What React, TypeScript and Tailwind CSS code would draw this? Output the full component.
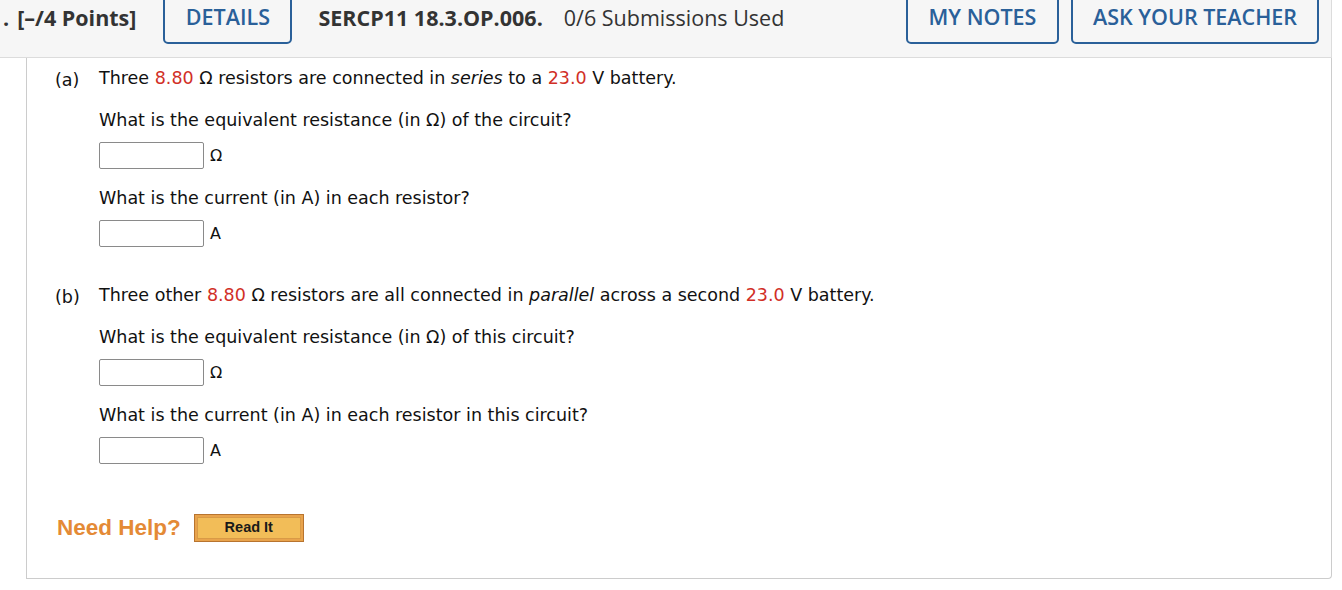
import React from "react";

const body = { fontFamily: '"DejaVu Sans", Verdana, sans-serif' };

function Red({ children }: { children: React.ReactNode }) {
  return <span className="text-[#d12f26]">{children}</span>;
}

function Answer({ unit }: { unit: string }) {
  return (
    <div className="flex items-center gap-[6px] h-[27px]">
      <div className="w-[105px] h-[27px] border border-[#8a8a8a] rounded-[2px] bg-white" />
      <span className="text-[16px]">{unit}</span>
    </div>
  );
}

export default function App() {
  return (
    <div className="w-[1342px] h-[590px] bg-white overflow-hidden">
      <div
        className="w-[1332px] h-[58px] bg-[#f6f6f6] border-b border-r border-[#dcdcdc] flex items-start text-[#333] text-[21.5px]"
        style={{ fontFamily: '"Open Sans", sans-serif' }}
      >
        <div className="flex items-center h-[37px] pl-[3px] font-bold">
          <span>.</span>
          <span className="ml-[8px] text-[21.5px]">[–/4 Points]</span>
        </div>
        <div className="ml-[27px]">
          <div className="w-[129px] h-[54px] -mt-[10px] border-2 border-[#2a6099] rounded-[5px] flex items-end justify-center pb-[9px] text-[#2a6099] font-semibold">
            DETAILS
          </div>
        </div>
        <div className="flex items-center h-[37px] ml-[26px]">
          <span className="font-bold">SERCP11 18.3.OP.006.</span>
          <span className="ml-[21px]">0/6 Submissions Used</span>
        </div>
        <div className="ml-auto flex gap-[12px] mr-[12px]">
          <div className="w-[153px] h-[54px] -mt-[10px] border-2 border-[#2a6099] rounded-[5px] flex items-end justify-center pb-[9px] text-[#2a6099] font-semibold">
            MY NOTES
          </div>
          <div className="w-[248px] h-[54px] -mt-[10px] border-2 border-[#2a6099] rounded-[5px] flex items-end justify-center pb-[9px] text-[#2a6099] font-semibold">
            ASK YOUR TEACHER
          </div>
        </div>
      </div>
      <div
        className="ml-[26px] w-[1306px] h-[521px] border-l border-r border-b border-[#cccccc] rounded-br-[4px] text-[#111] text-[17.5px]"
        style={body}
      >
        <div className="pl-[28px] pt-[9px]">
          <div className="flex">
            <span className="w-[44px]">(a)</span>
            <div className="flex flex-col">
              <div className="h-[22px] leading-[22px]">
                Three <Red>8.80</Red> Ω resistors are connected in <i>series</i> to a <Red>23.0</Red> V battery.
              </div>
              <div className="h-[22px] leading-[22px] mt-[20px]">What is the equivalent resistance (in Ω) of the circuit?</div>
              <div className="mt-[11px]"><Answer unit="Ω" /></div>
              <div className="h-[22px] leading-[22px] mt-[18px]">What is the current (in A) in each resistor?</div>
              <div className="mt-[11px]"><Answer unit="A" /></div>
            </div>
          </div>
          <div className="flex mt-[37px]">
            <span className="w-[44px]">(b)</span>
            <div className="flex flex-col">
              <div className="h-[22px] leading-[22px]">
                Three other <Red>8.80</Red> Ω resistors are all connected in <i>parallel</i> across a second <Red>23.0</Red> V battery.
              </div>
              <div className="h-[22px] leading-[22px] mt-[20px]">What is the equivalent resistance (in Ω) of this circuit?</div>
              <div className="mt-[11px]"><Answer unit="Ω" /></div>
              <div className="h-[22px] leading-[22px] mt-[18px]">What is the current (in A) in each resistor in this circuit?</div>
              <div className="mt-[11px]"><Answer unit="A" /></div>
            </div>
          </div>
          <div className="flex items-center mt-[47px] ml-[2px]" style={{ fontFamily: '"Liberation Sans", Arial, sans-serif' }}>
            <span className="text-[22.5px] font-bold text-[#e48a36]">Need Help?</span>
            <div className="ml-[13px] w-[110px] h-[28px] border border-[#b8742f] bg-[#e8a34c] p-[2px]">
              <div className="w-full h-full bg-[#f2bd58] border border-[#d99a46] flex items-center justify-center text-[14.5px] font-bold text-[#1a1a1a]">
                Read It
              </div>
            </div>
          </div>
        </div>
      </div>
    </div>
  );
}
